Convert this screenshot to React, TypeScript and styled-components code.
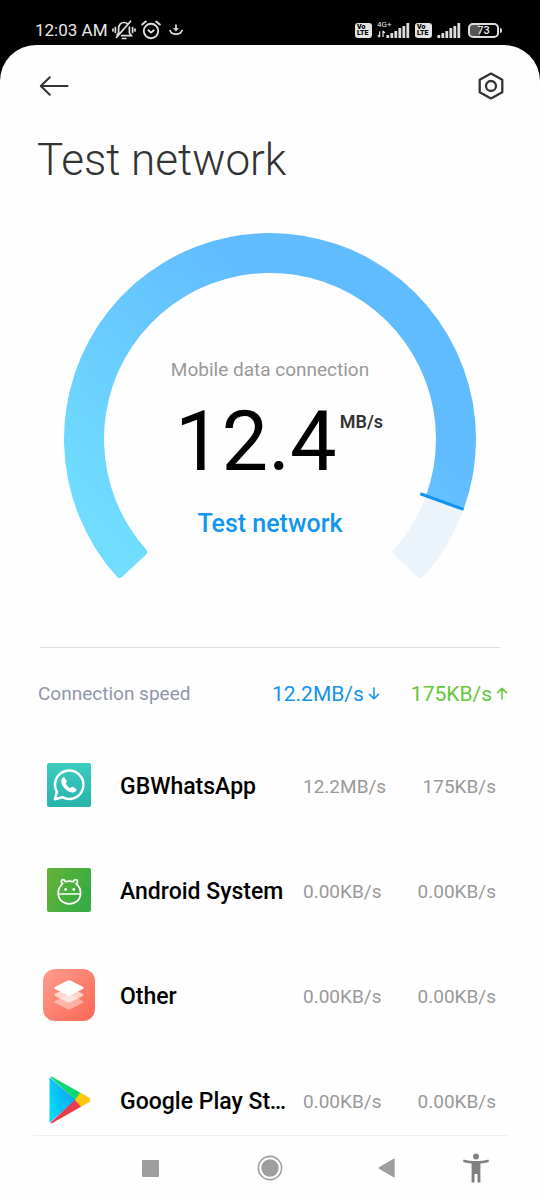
import React from 'react';
import styled, { createGlobalStyle } from 'styled-components';

const GlobalStyle = createGlobalStyle`
  *, *::before, *::after { box-sizing: border-box; }
  body { margin: 0; background: #000; font-family: Roboto, "Noto Sans", sans-serif; }
  button { border: 0; padding: 0; background: none; font: inherit; color: inherit; cursor: pointer; }
  svg { display: block; flex: none; }
`;

const Screen = styled.div`
  display: flex;
  flex-direction: column;
  height: 100vh;
  background: #000;
`;

const StatusBar = styled.header`
  display: flex;
  justify-content: space-between;
  align-items: flex-end;
  height: 45px;
  padding: 0 38px 4px 35px;
  color: #e8e8e8;
  flex: none;
`;

const StatusGroup = styled.div`
  display: flex;
  align-items: center;
  height: 22px;
  gap: 5px;
`;

const Clock = styled.span`
  font-size: 17px;
  line-height: 22px;
  white-space: nowrap;
`;

const VolteBadge = styled.span`
  display: flex;
  flex-direction: column;
  justify-content: center;
  width: 17px;
  height: 15px;
  padding-left: 2px;
  border-radius: 3px;
  background: #e4e4e4;
  color: #000;
  font-size: 7px;
  font-weight: 900;
  line-height: 6px;
`;

const Carrier = styled.span`
  display: flex;
  flex-direction: column;
  justify-content: flex-end;
  height: 15px;
  font-size: 8px;
  line-height: 8px;
`;

const CarrierBars = styled.span`
  display: flex;
  align-items: flex-end;
  margin-top: -6px;
`;

const Battery = styled.span`
  display: flex;
  align-items: center;
  margin-left: 2px;
`;

const BatteryCase = styled.span`
  width: 31px;
  height: 15px;
  border: 2px solid #dcdcdc;
  border-radius: 5px;
  background: linear-gradient(90deg, #555 0 10px, #000 10px);
  font-size: 11px;
  font-weight: 500;
  line-height: 12px;
  text-align: center;
`;

const BatteryTip = styled.span`
  width: 2px;
  height: 5px;
  margin-left: 1px;
  border-radius: 0 2px 2px 0;
  background: #dcdcdc;
`;

const Sheet = styled.div`
  display: flex;
  flex-direction: column;
  flex: 1;
  min-height: 0;
  border-radius: 36px 36px 0 0;
  background: #fefefe;
  overflow: hidden;
`;

const Content = styled.main`
  flex: 1;
  min-height: 0;
  overflow-y: auto;
  scrollbar-width: none;
`;

const Toolbar = styled.div`
  display: flex;
  justify-content: space-between;
  align-items: center;
  height: 82px;
  padding: 0 33px 0 38px;
`;

const IconButton = styled.button`
  display: grid;
  place-items: center;
  width: 32px;
  height: 32px;
`;

const Title = styled.h1`
  margin: 7px 37px 47px;
  color: #333;
  font-size: 44px;
  font-weight: 300;
  line-height: 52px;
`;

const Gauge = styled.section`
  display: grid;
  justify-items: center;
  margin: 0 64px;
  > * { grid-area: 1 / 1; }
`;

const GaugeRing = styled.svg`
  width: 100%;
  max-width: 412px;
  height: auto;
`;

const GaugeReadout = styled.div`
  display: flex;
  flex-direction: column;
  align-items: center;
  padding-top: 125px;
`;

const GaugeLabel = styled.p`
  margin: 0;
  color: #999;
  font-size: 19px;
  line-height: 24px;
`;

const Reading = styled.p`
  display: flex;
  align-items: flex-start;
  gap: 3px;
  margin: 10px 0 0 18px;
  color: #000;
`;

const ReadingValue = styled.span`
  font-size: 83px;
  line-height: 100px;
`;

const ReadingUnit = styled.span`
  margin-top: 18px;
  color: #333;
  font-size: 18px;
  font-weight: 600;
  line-height: 24px;
`;

const TestButton = styled.button`
  margin-top: 16px;
  color: #1296f0;
  font-size: 25px;
  font-weight: 500;
  line-height: 32px;
`;

const Divider = styled.hr`
  height: 1px;
  margin: 67px 40px 0;
  border: 0;
  background: #dedede;
`;

const Summary = styled.div`
  display: flex;
  align-items: center;
  height: 86px;
  padding: 6px 32px 0 38px;
`;

const SummaryTitle = styled.h2`
  flex: 1;
  margin: 0;
  color: #9096a8;
  font-size: 19px;
  font-weight: 400;
  line-height: 24px;
`;

const Total = styled.span<{ $color: string }>`
  display: flex;
  align-items: center;
  gap: 4px;
  margin-left: 31px;
  color: ${(p) => p.$color};
  font-size: 21px;
  line-height: 24px;
`;

const UsageTable = styled.table`
  width: calc(100% - 82px);
  margin: 0 44px 0 38px;
  border-collapse: collapse;
  table-layout: fixed;
`;

const AppCell = styled.th`
  height: 105px;
  padding: 0;
  text-align: left;
`;

const AppEntry = styled.div`
  display: flex;
  align-items: center;
  padding-right: 16px;
`;

const AppIcon = styled.span`
  display: grid;
  place-items: center;
  flex: none;
  width: 61px;
  height: 54px;
  margin: 0 21px 4px 0;
`;

const AppName = styled.span`
  overflow: hidden;
  color: #000;
  font-size: 23px;
  font-weight: 500;
  line-height: 32px;
  text-overflow: ellipsis;
  white-space: nowrap;
`;

const RateCell = styled.td<{ $align: 'left' | 'right'; $width: number }>`
  width: ${(p) => p.$width}px;
  padding: 0;
  color: #999;
  font-size: 19px;
  line-height: 24px;
  text-align: ${(p) => p.$align};
`;

const NavBar = styled.nav`
  display: grid;
  grid-template-columns: 58fr 120fr 118fr 116fr 63fr;
  align-items: center;
  flex: none;
  height: 65px;
  margin: 0 33px;
  border-top: 1px solid #f0f0f0;
`;

const NavButton = styled.button<{ $first?: boolean }>`
  display: grid;
  place-items: center;
  height: 48px;
  ${(p) => p.$first && 'grid-column: 2;'}
`;

const SignalBars = () => (
  <svg width="24" height="15" viewBox="0 0 24 15" fill="#dcdcdc">
    {[3, 5, 7, 10, 12, 15].map((h, i) => (
      <rect key={h} x={i * 4 + 0.4} y={15 - h} width="2.8" height={h} rx="0.6" />
    ))}
  </svg>
);

const Volte = () => (
  <VolteBadge>
    <span>Vo</span>
    <span>LTE</span>
  </VolteBadge>
);

const MutedBell = () => (
  <svg width="24" height="22" viewBox="0 0 24 22" fill="none" stroke="#e0e0e0" strokeWidth="1.7" strokeLinecap="round">
    <path d="M6.6 13.5V9.4C6.6 5.7 9 3.5 12 3.5c1.500 0 2.800.5 3.700 1.400M17.400 8v6l2 2.600H9.600" />
    <path d="M18.600 2.200 4.500 18.400M6.600 14l-1.500 1.800" />
    <path d="M10.500 19.500h3.400M3.400 8.500v5M20.600 8.500v5M1 10v2M23 10v2" />
  </svg>
);

const AlarmClock = () => (
  <svg width="20" height="20" viewBox="0 0 20 20" fill="none" stroke="#e0e0e0" strokeWidth="1.900" strokeLinecap="round" strokeLinejoin="round">
    <circle cx="10" cy="11" r="7.200" />
    <path d="M7.400 10.300 10 12.600l2.700-2.300M1.200 4.600 4.800 1.600M18.800 4.600l-3.600-3" />
  </svg>
);

const DownloadMark = () => (
  <svg width="17" height="12" viewBox="-3 0 17 12" fill="none" stroke="#e0e0e0" strokeWidth="1.700" strokeLinecap="round">
    <path d="M1 6.500c1.500 4.800 10.500 4.800 12 0" />
    <path d="M7 1v4" />
    <path d="M4.700 4.500h4.600L7 7Z" fill="#e0e0e0" strokeWidth="0.600" />
  </svg>
);

const DataArrows = () => (
  <svg width="9" height="8" viewBox="0 0 9 8" fill="none" stroke="#dcdcdc" strokeWidth="1.300">
    <path d="M2.600 7V1.200M.8 5.200l1.800 2M6 1v6M6 1l1.800 2" />
  </svg>
);

const BackArrow = () => (
  <svg width="30" height="22" viewBox="0 0 30 22" fill="none" stroke="#333" strokeWidth="2" strokeLinecap="round" strokeLinejoin="round">
    <path d="M28.500 11H1.800M10.800 2.200 1.800 11l9 8.800" />
  </svg>
);

const SettingsHex = () => (
  <svg width="28" height="30" viewBox="0 0 28 30" fill="none" stroke="#333" strokeWidth="2.300" strokeLinejoin="round">
    <path d="M14 2.600 25.300 8.800v12.400L14 27.400 2.700 21.200V8.800Z" />
    <circle cx="14" cy="15" r="5" />
  </svg>
);

const RateArrow = ({ up = false }: { up?: boolean }) => (
  <svg width="12" height="14" viewBox="0 0 12 14" fill="none" stroke="currentColor" strokeWidth="1.500" strokeLinecap="round" strokeLinejoin="round">
    {up ? <path d="M6 12V1.200M1.500 5.600 6 1.200l4.500 4.400" /> : <path d="M6 1v10.800M1.500 7.400 6 11.800l4.500-4.400" />}
  </svg>
);

const WhatsAppIcon = () => (
  <svg width="44" height="44" viewBox="0 0 44 44">
    <defs>
      <linearGradient id="teal" x1="0" y1="0" x2="0" y2="1">
        <stop stopColor="#3dcbc0" />
        <stop offset="1" stopColor="#27b3a9" />
      </linearGradient>
    </defs>
    <rect width="44" height="44" rx="2" fill="url(#teal)" />
    <path d="m7.900 36.200 2-7.300a14.200 14.200 0 1 1 5.400 5.300Z" fill="none" stroke="#fff" strokeWidth="2.500" strokeLinejoin="round" />
    <path d="M17.500 14.500c-.7-.7-3.300.8-3.300 3.700 0 5 6.400 11.400 11.400 11.400 3 0 4.500-2.600 3.800-3.500l-3.600-2.300c-.9-.4-1.900 1.300-2.700 1.200-1.700-.6-3.800-2.700-4.400-4.400-.1-.8 1.500-1.700 1.100-2.700Z" fill="#fff" />
  </svg>
);

const AndroidIcon = () => (
  <svg width="44" height="44" viewBox="0 0 44 44">
    <defs>
      <linearGradient id="green" x1="0" y1="0" x2="1" y2="0.500">
        <stop stopColor="#65b337" />
        <stop offset="1" stopColor="#37ac43" />
      </linearGradient>
    </defs>
    <rect width="44" height="44" rx="2" fill="url(#green)" />
    <g fill="none" stroke="#fff" strokeWidth="1.700" strokeLinejoin="round" strokeLinecap="round">
      <path d="M15.700 15.600c-2-.9-1.800-4 .4-4 1.700 0 1.900 1.200 2.300 2.200 2.500-.9 5.500-.9 8 0 .4-1 .6-2.200 2.300-2.200 2.200 0 2.400 3.100.4 4 3 2.600 4.500 5.800 4.500 9.200 0 7-4.700 11-11.200 11s-11.200-4-11.200-11c0-3.400 1.500-6.600 4.500-9.200Z" />
      <path d="M11.400 26h22" />
    </g>
    <circle cx="18.600" cy="21.500" r="1.400" fill="#fff" />
    <circle cx="26.800" cy="21.500" r="1.400" fill="#fff" />
  </svg>
);

const LayersIcon = () => (
  <svg width="52" height="52" viewBox="0 0 52 52">
    <defs>
      <linearGradient id="coral" x1="0" y1="0" x2="1" y2="1">
        <stop stopColor="#ff9d8c" />
        <stop offset="1" stopColor="#fb6655" />
      </linearGradient>
    </defs>
    <rect width="52" height="52" rx="12" fill="url(#coral)" />
    <g fill="#fff">
      {[
        [14, 0.4],
        [7, 0.65],
        [0, 1],
      ].map(([dy, opacity]) => (
        <path
          key={dy}
          d="M24.700 11.500q1.300-.6 2.600 0l12.400 6.200q2 1.100 0 2.200l-12.400 6.400q-1.300.6-2.600 0L12.300 19.900q-2-1.100 0-2.200Z"
          transform={`translate(0 ${dy})`}
          opacity={opacity}
        />
      ))}
    </g>
  </svg>
);

const PlayIcon = () => (
  <svg width="42" height="48" viewBox="0 0 42 48">
    <defs>
      <linearGradient id="play" x1="1" y1="0" x2="0" y2="0.500">
        <stop stopColor="#1096ee" />
        <stop offset="1" stopColor="#05d8fa" />
      </linearGradient>
      <clipPath id="playShape">
        <path d="M1.500 2.800C1.500 1 3.200.400 4.800 1.200L41 21.600c2 1.200 2 3.500 0 4.700L4.800 46.800c-1.600.8-3.300.2-3.300-1.600Z" />
      </clipPath>
    </defs>
    <g clipPath="url(#playShape)">
      <path d="M0 0 28 24 0 48Z" fill="url(#play)" />
      <path d="M1 0h10l22.500 17.600L27.500 24Z" fill="#0fd873" />
      <path d="M32.600 16 44 20v8l-11.400 3L27 24Z" fill="#ffc70a" />
      <path d="M1 48h10l22-17.300L27 24Z" fill="#ec3a4c" />
    </g>
  </svg>
);

const CENTER = 206;
const OUTER = 206;
const INNER = 166;

const point = (radius: number, degrees: number) => {
  const a = (degrees * Math.PI) / 180;
  return `${(CENTER + radius * Math.cos(a)).toFixed(2)} ${(CENTER + radius * Math.sin(a)).toFixed(2)}`;
};

/* Ring slice running clockwise between two angles, with softened corners at either end. */
const ringSlice = (from: number, to: number, softFrom: boolean, softTo: boolean) => {
  const large = to - from > 180 ? 1 : 0;
  const f = softFrom ? 1 : 0;
  const t = softTo ? 1 : 0;
  return [
    `M${point(OUTER, from + f)}`,
    `A${OUTER} ${OUTER} 0 ${large} 1 ${point(OUTER, to - t)}`,
    `Q${point(OUTER, to)} ${point(OUTER - 4 * t, to)}`,
    `L${point(INNER + 4 * t, to)}`,
    `Q${point(INNER, to)} ${point(INNER, to - t)}`,
    `A${INNER} ${INNER} 0 ${large} 0 ${point(INNER, from + f)}`,
    `Q${point(INNER, from)} ${point(INNER + 4 * f, from)}`,
    `L${point(OUTER - 4 * f, from)}`,
    `Q${point(OUTER, from)} ${point(OUTER, from + f)}Z`,
  ].join('');
};

const SpeedRing = () => (
  <GaugeRing viewBox="0 0 412 347" aria-hidden="true">
    <defs>
      <linearGradient id="ring" gradientUnits="userSpaceOnUse" x1="20" y1="280" x2="220" y2="60">
        <stop stopColor="#70ddff" />
        <stop offset="1" stopColor="#61bbff" />
      </linearGradient>
    </defs>
    <path d={ringSlice(20, 43, false, true)} fill="#ebf3fb" />
    <path d={ringSlice(137, 380, true, false)} fill="url(#ring)" />
    <path d={`M${point(160, 20)}L${point(206, 20)}`} stroke="#1193ee" strokeWidth="3" />
  </GaugeRing>
);

const apps = [
  { name: 'GBWhatsApp', down: '12.2MB/s', up: '175KB/s', icon: <WhatsAppIcon /> },
  { name: 'Android System', down: '0.00KB/s', up: '0.00KB/s', icon: <AndroidIcon /> },
  { name: 'Other', down: '0.00KB/s', up: '0.00KB/s', icon: <LayersIcon /> },
  { name: 'Google Play Store', down: '0.00KB/s', up: '0.00KB/s', icon: <PlayIcon /> },
];

export default function App() {
  return (
    <Screen>
      <GlobalStyle />
      <StatusBar>
        <StatusGroup>
          <Clock>12:03 AM</Clock>
          <MutedBell />
          <AlarmClock />
          <DownloadMark />
        </StatusGroup>
        <StatusGroup>
          <Volte />
          <Carrier>
            <span>4G+</span>
            <CarrierBars>
              <DataArrows />
              <SignalBars />
            </CarrierBars>
          </Carrier>
          <Volte />
          <SignalBars />
          <Battery>
            <BatteryCase>73</BatteryCase>
            <BatteryTip />
          </Battery>
        </StatusGroup>
      </StatusBar>
      <Sheet>
        <Content>
          <Toolbar>
            <IconButton aria-label="Back">
              <BackArrow />
            </IconButton>
            <IconButton aria-label="Settings">
              <SettingsHex />
            </IconButton>
          </Toolbar>
          <Title>Test network</Title>
          <Gauge>
            <SpeedRing />
            <GaugeReadout>
              <GaugeLabel>Mobile data connection</GaugeLabel>
              <Reading>
                <ReadingValue>12.4</ReadingValue>
                <ReadingUnit>MB/s</ReadingUnit>
              </Reading>
              <TestButton>Test network</TestButton>
            </GaugeReadout>
          </Gauge>
          <Divider />
          <Summary>
            <SummaryTitle>Connection speed</SummaryTitle>
            <Total $color="#1193ee">
              12.2MB/s
              <RateArrow />
            </Total>
            <Total $color="#64c73c">
              175KB/s
              <RateArrow up />
            </Total>
          </Summary>
          <UsageTable>
            <tbody>
              {apps.map((app) => (
                <tr key={app.name}>
                  <AppCell scope="row">
                    <AppEntry>
                      <AppIcon>{app.icon}</AppIcon>
                      <AppName>{app.name}</AppName>
                    </AppEntry>
                  </AppCell>
                  <RateCell $align="left" $width={103}>{app.down}</RateCell>
                  <RateCell $align="right" $width={90}>{app.up}</RateCell>
                </tr>
              ))}
            </tbody>
          </UsageTable>
        </Content>
        <NavBar>
          <NavButton $first aria-label="Recent apps">
            <svg width="17" height="17" viewBox="0 0 17 17">
              <rect width="17" height="17" rx="1" fill="#9e9e9e" />
            </svg>
          </NavButton>
          <NavButton aria-label="Home">
            <svg width="26" height="26" viewBox="0 0 26 26">
              <circle cx="13" cy="13" r="11.600" fill="none" stroke="#9e9e9e" strokeWidth="1.600" />
              <circle cx="13" cy="13" r="8.700" fill="#9e9e9e" />
            </svg>
          </NavButton>
          <NavButton aria-label="Back to previous screen">
            <svg width="17" height="20" viewBox="0 0 17 20">
              <path d="M15.500.8c.8-.5 1.200-.2 1.200.6v17.200c0 .8-.4 1.100-1.200.6L1 10.800q-1-.8 0-1.600Z" fill="#9e9e9e" />
            </svg>
          </NavButton>
          <NavButton aria-label="Accessibility">
            <svg width="26" height="30" viewBox="0 0 26 30" fill="#808080">
              <circle cx="13" cy="3.600" r="3" />
              <path d="M.5 6.600C8.500 8.600 17.500 8.600 25.500 6.600l.4 2.500c-2.900.8-5.800 1.200-8.500 1.400v19h-2.900V21h-3v8.500H8.600v-19C5.900 10.300 3 9.900.1 9.100Z" />
            </svg>
          </NavButton>
        </NavBar>
      </Sheet>
    </Screen>
  );
}
